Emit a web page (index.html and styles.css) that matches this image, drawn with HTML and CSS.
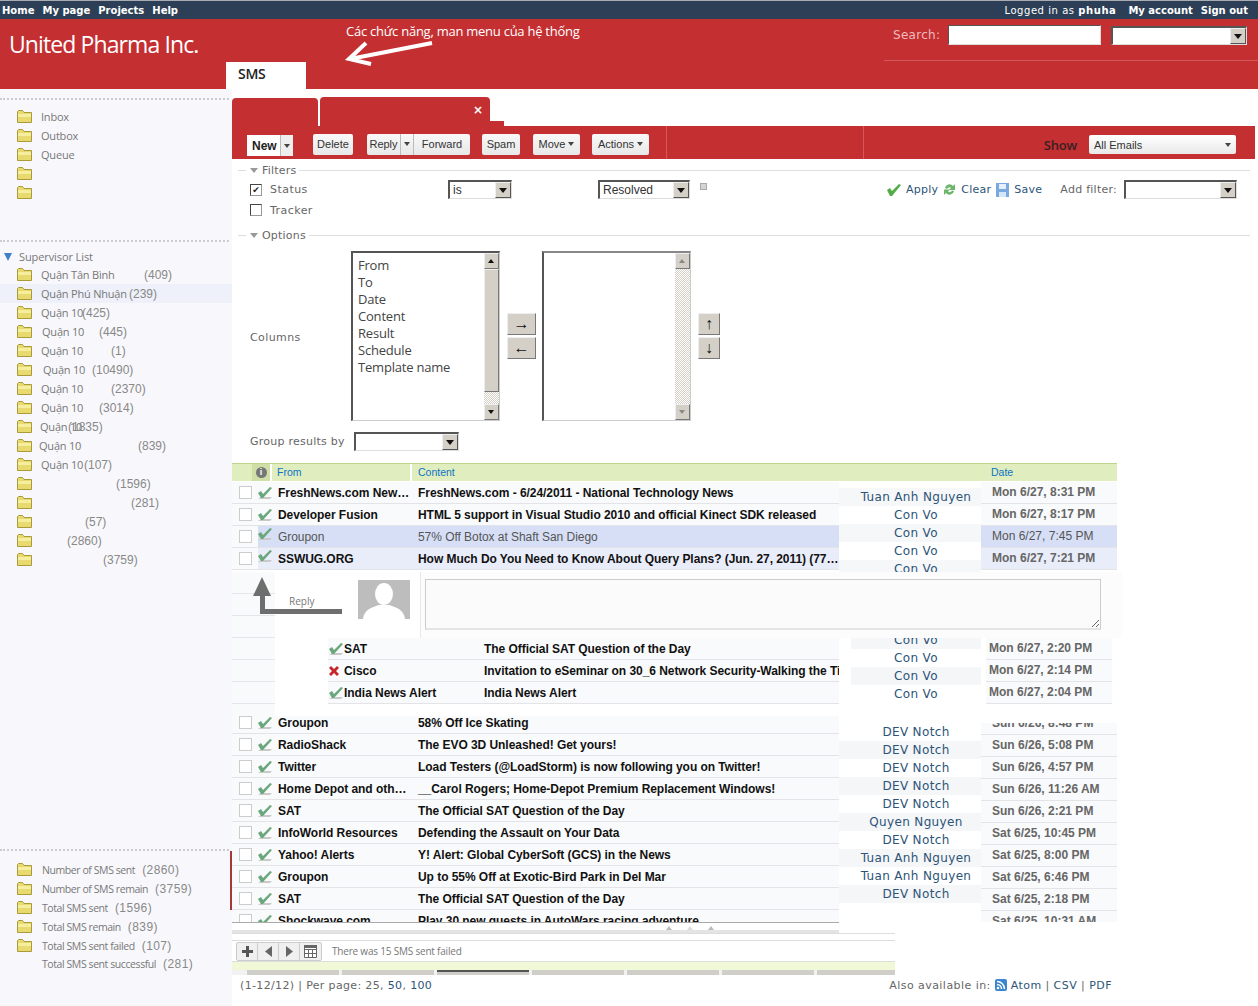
FILE: index.html
```html
<!DOCTYPE html>
<html lang="en">
  <head>
    <meta charset="UTF-8" />
    <meta name="viewport" content="width=device-width, initial-scale=1.0" />
    <title>United Pharma Inc. - SMS</title>
    <link rel="stylesheet" href="styles.css">
  </head>
  <body>
    <svg class="sprites" width="0" height="0">
      <symbol id="folder" viewBox="0 0 15 13">
        <path d="M0.5 12.5V1.5L1.5 0.5H5.5L7 2.5H14.5V12.5Z" fill="#e9da70" stroke="#a99a3a" />
        <path d="M1 4H14V7H1Z" fill="#f6ee9f" />
      </symbol>
      <symbol id="tick" viewBox="0 0 16 14">
        <path d="M1 13H13L15 11H4Z" fill="#c9c9c9" />
        <path d="M1 7L4 5L6 8L13 1L15 2L6 12H4Z" fill="#6aa87c" />
      </symbol>
      <symbol id="cross" viewBox="0 0 12 12">
        <path d="M1 3L3 1L6 4L9 1L11 3L8 6L11 9L9 11L6 8L3 11L1 9L4 6Z" fill="#c8242b" />
      </symbol>
    </svg>

    <div class="page">
      <div class="topbar">
        <div class="nav">
          <a>Home</a><a>My page</a><a>Projects</a><a>Help</a>
        </div>
        <div class="nav">
          <span class="logged">Logged in as <b>phuha</b></span><a>My account</a><a>Sign out</a>
        </div>
      </div>

      <header class="header">
        <div class="logo">United Pharma Inc.</div>
        <div class="note">Các chức năng, man menu của hệ thống</div>
        <svg class="note-arrow" width="92" height="28" viewBox="0 0 92 28">
          <path d="M88 3L6 19M22 3L5 19L27 24" fill="none" stroke="#fff" stroke-width="4" />
        </svg>
        <div class="search">
          <label>Search:</label>
          <div class="search-input"></div>
          <div class="combo combo-search"><span class="combo-text"></span><span class="combo-btn"></span></div>
        </div>
        <div class="header-line"></div>
        <div class="main-tab">SMS</div>
      </header>

      <div class="layout">
        <aside class="sidebar">
          <div class="dots"></div>
          <div class="tree tree-top">
            <div class="tree-row"><svg class="folder"><use href="#folder" /></svg><span class="name">Inbox</span></div>
            <div class="tree-row"><svg class="folder"><use href="#folder" /></svg><span class="name">Outbox</span></div>
            <div class="tree-row"><svg class="folder"><use href="#folder" /></svg><span class="name">Queue</span></div>
            <div class="tree-row"><svg class="folder"><use href="#folder" /></svg></div>
            <div class="tree-row"><svg class="folder"><use href="#folder" /></svg></div>
          </div>
          <div class="dots dots-super"></div>
          <div class="super-title"><span class="tri"></span>Supervisor List</div>
          <div class="tree">
            <div class="tree-row"><svg class="folder"><use href="#folder" /></svg><span class="name">Quận Tân Bình</span><span class="count off-103">(409)</span></div>
            <div class="tree-row selected"><svg class="folder"><use href="#folder" /></svg><span class="name">Quận Phú Nhuận</span><span class="count off-88">(239)</span></div>
            <div class="tree-row"><svg class="folder"><use href="#folder" /></svg><span class="name">Quận 10</span><span class="count off-41">(425)</span></div>
            <div class="tree-row"><svg class="folder"><use href="#folder" /></svg><span class="name nudge-r1">Quận 10</span><span class="count off-57">(445)</span></div>
            <div class="tree-row"><svg class="folder"><use href="#folder" /></svg><span class="name">Quận 10</span><span class="count off-70">(1)</span></div>
            <div class="tree-row"><svg class="folder"><use href="#folder" /></svg><span class="name nudge-r2">Quận 10</span><span class="count off-49">(10490)</span></div>
            <div class="tree-row"><svg class="folder"><use href="#folder" /></svg><span class="name">Quận 10</span><span class="count off-70">(2370)</span></div>
            <div class="tree-row"><svg class="folder"><use href="#folder" /></svg><span class="name">Quận 10</span><span class="count off-58">(3014)</span></div>
            <div class="tree-row"><svg class="folder"><use href="#folder" /></svg><span class="name nudge-l1">Quận 10</span><span class="count off-28">(1835)</span></div>
            <div class="tree-row"><svg class="folder"><use href="#folder" /></svg><span class="name nudge-l2">Quận 10</span><span class="count off-99">(839)</span></div>
            <div class="tree-row"><svg class="folder"><use href="#folder" /></svg><span class="name">Quận 10</span><span class="count off-43">(107)</span></div>
            <div class="tree-row"><svg class="folder"><use href="#folder" /></svg><span class="name"></span><span class="count off-75">(1596)</span></div>
            <div class="tree-row"><svg class="folder"><use href="#folder" /></svg><span class="name"></span><span class="count off-90">(281)</span></div>
            <div class="tree-row"><svg class="folder"><use href="#folder" /></svg><span class="name"></span><span class="count off-44">(57)</span></div>
            <div class="tree-row"><svg class="folder"><use href="#folder" /></svg><span class="name"></span><span class="count off-26">(2860)</span></div>
            <div class="tree-row"><svg class="folder"><use href="#folder" /></svg><span class="name"></span><span class="count off-62">(3759)</span></div>
          </div>
          <div class="dots dots-stats"></div>
          <div class="stats">
            <div class="tree-row"><svg class="folder"><use href="#folder" /></svg><span class="stat-name">Number of SMS sent</span><span class="stat-count">(2860)</span></div>
            <div class="tree-row"><svg class="folder"><use href="#folder" /></svg><span class="stat-name">Number of SMS remain</span><span class="stat-count">(3759)</span></div>
            <div class="tree-row"><svg class="folder"><use href="#folder" /></svg><span class="stat-name">Total SMS sent</span><span class="stat-count">(1596)</span></div>
            <div class="tree-row"><svg class="folder"><use href="#folder" /></svg><span class="stat-name">Total SMS remain</span><span class="stat-count">(839)</span></div>
            <div class="tree-row"><svg class="folder"><use href="#folder" /></svg><span class="stat-name">Total SMS sent failed</span><span class="stat-count">(107)</span></div>
            <div class="tree-row no-folder"><span class="stat-name">Total SMS sent successful</span><span class="stat-count">(281)</span></div>
          </div>
        </aside>

        <main class="content">
          <div class="tabs">
            <div class="tab tab-one"></div>
            <div class="tab tab-two"><span class="tab-close">×</span></div>
            <div class="tab-step"></div>
          </div>

          <div class="toolbar">
            <div class="tool-left">
              <div class="btn-new"><b>New</b><span class="caret-box"><i class="caret"></i></span></div>
              <a class="btn btn-delete">Delete</a>
              <div class="btn-group">
                <a class="btn btn-reply">Reply</a><a class="btn btn-caret"><i class="caret"></i></a><a class="btn btn-forward">Forward</a>
              </div>
              <a class="btn btn-spam">Spam</a>
              <a class="btn btn-move">Move <i class="caret"></i></a>
              <a class="btn btn-actions">Actions <i class="caret"></i></a>
            </div>
            <div class="tool-mid"></div>
            <div class="tool-right">
              <span class="show">Show</span>
              <div class="show-select"><span>All Emails</span><i class="caret"></i></div>
            </div>
          </div>

          <div class="legend legend-filters"><i class="dash"></i><i class="legend-tri"></i><span>Filters</span><i class="rule"></i></div>

          <div class="filter-row filter-status">
            <div class="f-check"><span class="checkbox checked">✔</span><span>Status</span></div>
            <div class="f-op"><div class="combo combo-is"><span class="combo-text">is</span><span class="combo-btn"></span></div></div>
            <div class="f-val">
              <div class="combo combo-resolved"><span class="combo-text">Resolved</span><span class="combo-btn"></span></div>
              <span class="mini-plus"></span>
            </div>
            <div class="f-actions">
              <svg class="act-icon" width="16" height="14" viewBox="0 0 16 14"><path d="M1 7L4 5L6 8L13 1L15 2L6 13H4Z" fill="#52ad48" /></svg>
              <a class="act-apply">Apply</a>
              <svg class="act-icon" width="13" height="15" viewBox="0 0 13 15"><path d="M2 6A4.500 4.500 0 0 1 10 4L12 2V8H6L8 6A2.500 2.500 0 0 0 4 7ZM11 9A4.500 4.500 0 0 1 3 11L1 13V7.500H7L5 9.500A2.500 2.500 0 0 0 9 8.500Z" fill="#6db56a" /></svg>
              <a class="act-clear">Clear</a>
              <svg class="act-icon" width="13" height="14" viewBox="0 0 13 14"><path d="M0 0H13V14H0Z" fill="#7aa9e0" /><path d="M3 1H10V6H3Z" fill="#e6f0fb" /><path d="M3 9H10V14H3Z" fill="#d7e6f6" /></svg>
              <a class="act-save">Save</a>
              <span class="add-filter">Add filter:</span>
              <div class="combo combo-add"><span class="combo-text"></span><span class="combo-btn"></span></div>
            </div>
          </div>
          <div class="filter-row filter-tracker">
            <div class="f-check"><span class="checkbox"></span><span>Tracker</span></div>
          </div>

          <div class="legend legend-options"><i class="dash"></i><i class="legend-tri"></i><span>Options</span><i class="rule"></i></div>

          <div class="columns">
            <div class="columns-label">Columns</div>
            <div class="listbox">
              <ul class="list-items">
                <li>From</li><li>To</li><li>Date</li><li>Content</li><li>Result</li><li>Schedule</li><li>Template name</li>
              </ul>
              <div class="scroll">
                <span class="scroll-btn up"></span>
                <span class="scroll-thumb"></span>
                <span class="scroll-track"></span>
                <span class="scroll-btn down"></span>
              </div>
            </div>
            <div class="move-btns move-lr">
              <button class="arrow-btn">→</button>
              <button class="arrow-btn">←</button>
            </div>
            <div class="listbox listbox-empty">
              <div class="list-items"></div>
              <div class="scroll scroll-off">
                <span class="scroll-btn up"></span>
                <span class="scroll-track"></span>
                <span class="scroll-btn down"></span>
              </div>
            </div>
            <div class="move-btns move-ud">
              <button class="arrow-btn">↑</button>
              <button class="arrow-btn">↓</button>
            </div>
          </div>

          <div class="group-row">
            <span>Group results by</span>
            <div class="combo combo-group"><span class="combo-text"></span><span class="combo-btn"></span></div>
          </div>

          <div class="thead">
            <div class="th-blank"></div>
            <div class="th-info"><span class="info">i</span></div>
            <div class="th th-from">From</div>
            <div class="th th-content">Content</div>
            <div class="th th-date">Date</div>
          </div>

          <!-- first rows -->
          <section class="mail-block block-one">
            <div class="mail-list">
              <div class="mail"><span class="chk"></span><svg class="tick"><use href="#tick" /></svg><span class="from">FreshNews.com New…</span><span class="subj">FreshNews.com - 6/24/2011 - National Technology News</span></div>
              <div class="mail"><span class="chk"></span><svg class="tick"><use href="#tick" /></svg><span class="from">Developer Fusion</span><span class="subj">HTML 5 support in Visual Studio 2010 and official Kinect SDK released</span></div>
              <div class="mail is-read active"><span class="chk"></span><svg class="tick raised"><use href="#tick" /></svg><span class="from">Groupon</span><span class="subj">57% Off Botox at Shaft San Diego</span></div>
              <div class="mail soft"><span class="chk"></span><svg class="tick raised"><use href="#tick" /></svg><span class="from">SSWUG.ORG</span><span class="subj">How Much Do You Need to Know About Query Plans? (Jun. 27, 2011) (77…</span></div>
            </div>
            <div class="to-list">
              <div>Tuan Anh Nguyen</div><div>Con Vo</div><div>Con Vo</div><div>Con Vo</div><div>Con Vo</div>
            </div>
            <div class="date-list">
              <div>Mon 6/27, 8:31 PM</div><div>Mon 6/27, 8:17 PM</div><div class="is-read active">Mon 6/27, 7:45 PM</div><div class="soft">Mon 6/27, 7:21 PM</div>
            </div>
          </section>

          <div class="expanded">
            <div class="reply-band">
              <svg class="reply-arrow" width="90" height="37" viewBox="0 0 90 37">
                <path d="M10 0L19 19H13V32H90V37H8V19H1Z" fill="#6e6e6e" />
              </svg>
              <span class="reply-label">Reply</span>
              <svg class="avatar" width="52" height="39" viewBox="0 0 52 39">
                <rect width="52" height="39" fill="#bdbdbd" />
                <ellipse cx="26" cy="14" rx="9" ry="11" fill="#fff" />
                <path d="M5 39C6 29 15 27 21 25H31C37 27 46 29 47 39Z" fill="#fff" />
              </svg>
              <div class="reply-panel"><textarea class="reply-box"></textarea></div>
            </div>

            <!-- replies of the open mail -->
            <section class="mail-block block-two">
              <div class="mail-list">
                <div class="mail"><svg class="tick"><use href="#tick" /></svg><span class="from">SAT</span><span class="subj">The Official SAT Question of the Day</span></div>
                <div class="mail"><svg class="cross"><use href="#cross" /></svg><span class="from">Cisco</span><span class="subj">Invitation to eSeminar on 30_6 Network Security-Walking the Ti</span></div>
                <div class="mail"><svg class="tick"><use href="#tick" /></svg><span class="from">India News Alert</span><span class="subj">India News Alert</span></div>
              </div>
              <div class="to-list">
                <div>Con Vo</div><div>Con Vo</div><div>Con Vo</div><div>Con Vo</div>
              </div>
              <div class="date-list">
                <div>Mon 6/27, 2:20 PM</div><div>Mon 6/27, 2:14 PM</div><div>Mon 6/27, 2:04 PM</div>
              </div>
            </section>
          </div>

          <!-- older rows -->
          <section class="mail-block block-three">
            <div class="mail-list">
              <div class="mail"><span class="chk"></span><svg class="tick"><use href="#tick" /></svg><span class="from">Groupon</span><span class="subj">58% Off Ice Skating</span></div>
              <div class="mail"><span class="chk"></span><svg class="tick"><use href="#tick" /></svg><span class="from">RadioShack</span><span class="subj">The EVO 3D Unleashed! Get yours!</span></div>
              <div class="mail"><span class="chk"></span><svg class="tick"><use href="#tick" /></svg><span class="from">Twitter</span><span class="subj">Load Testers (@LoadStorm) is now following you on Twitter!</span></div>
              <div class="mail"><span class="chk"></span><svg class="tick"><use href="#tick" /></svg><span class="from">Home Depot and oth…</span><span class="subj">__Carol Rogers; Home-Depot Premium Replacement Windows!</span></div>
              <div class="mail"><span class="chk"></span><svg class="tick"><use href="#tick" /></svg><span class="from">SAT</span><span class="subj">The Official SAT Question of the Day</span></div>
              <div class="mail"><span class="chk"></span><svg class="tick"><use href="#tick" /></svg><span class="from">InfoWorld Resources</span><span class="subj">Defending the Assault on Your Data</span></div>
              <div class="mail"><span class="chk"></span><svg class="tick"><use href="#tick" /></svg><span class="from">Yahoo! Alerts</span><span class="subj">Y! Alert: Global CyberSoft (GCS) in the News</span></div>
              <div class="mail"><span class="chk"></span><svg class="tick"><use href="#tick" /></svg><span class="from">Groupon</span><span class="subj">Up to 55% Off at Exotic-Bird Park in Del Mar</span></div>
              <div class="mail"><span class="chk"></span><svg class="tick"><use href="#tick" /></svg><span class="from">SAT</span><span class="subj">The Official SAT Question of the Day</span></div>
              <div class="mail"><span class="chk"></span><svg class="tick"><use href="#tick" /></svg><span class="from">Shockwave.com</span><span class="subj">Play 30 new quests in AutoWars racing adventure</span></div>
            </div>
            <div class="to-list">
              <div>DEV Notch</div><div>DEV Notch</div><div>DEV Notch</div><div>DEV Notch</div><div>DEV Notch</div><div>Quyen Nguyen</div><div>DEV Notch</div><div>Tuan Anh Nguyen</div><div>Tuan Anh Nguyen</div><div>DEV Notch</div>
            </div>
            <div class="date-list">
              <div>Sun 6/26, 8:48 PM</div><div>Sun 6/26, 5:08 PM</div><div>Sun 6/26, 4:57 PM</div><div>Sun 6/26, 11:26 AM</div><div>Sun 6/26, 2:21 PM</div><div>Sat 6/25, 10:45 PM</div><div>Sat 6/25, 8:00 PM</div><div>Sat 6/25, 6:46 PM</div><div>Sat 6/25, 2:18 PM</div><div>Sat 6/25, 10:31 AM</div>
            </div>
          </section>

          <div class="table-end"><i class="up-mark"></i><i class="up-mark small"></i><i class="up-mark"></i></div>

          <div class="pager">
            <div class="pager-btns">
              <span class="pg"><svg width="11" height="11" viewBox="0 0 11 11"><path d="M4 0H7V4H11V7H7V11H4V7H0V4H4Z" fill="#555" /></svg></span>
              <span class="pg"><svg width="7" height="11" viewBox="0 0 7 11"><path d="M7 0V11L0 5.500Z" fill="#666" /></svg></span>
              <span class="pg"><svg width="7" height="11" viewBox="0 0 7 11"><path d="M0 0V11L7 5.500Z" fill="#666" /></svg></span>
              <span class="pg"><svg width="13" height="13" viewBox="0 0 13 13"><path d="M0.500 0.500H12.500V12.500H0.500ZM0.500 4.500H12.500M0.500 8.500H12.500M4.500 4.500V12.500M8.500 4.500V12.500" fill="#fff" stroke="#666" /><path d="M0 0H13V3H0Z" fill="#666" /></svg></span>
            </div>
            <span class="pager-msg">There was 15 SMS sent failed</span>
          </div>

          <div class="green-strip"></div>
          <div class="gray-strip"><i></i><i></i><i class="tab-dark"></i><i></i><i></i><i></i><i></i></div>

          <footer class="footer">
            <div>(1-12/12) | Per page: 25, <a>50</a>, <a>100</a></div>
            <div class="also">
              Also available in:
              <svg class="rss" width="12" height="12" viewBox="0 0 12 12">
                <rect width="12" height="12" rx="2" fill="#3a87cf" />
                <circle cx="3" cy="9" r="1.300" fill="#fff" />
                <path d="M2 5.500A4.500 4.500 0 0 1 6.500 10M2 2.500A7.500 7.500 0 0 1 9.500 10" fill="none" stroke="#fff" stroke-width="1.500" />
              </svg>
              <a>Atom</a> | <a>CSV</a> | <a>PDF</a>
            </div>
          </footer>
        </main>
      </div>
    </div>
  </body>
</html>
```

FILE: styles.css
```css
/* Base */
* {
  box-sizing: border-box;
}

body {
  margin: 0;
  background: #fff;
  font-family: "DejaVu Sans", sans-serif;
  font-size: 11px;
  color: #555;
}

.sprites {
  position: absolute;
}

.page {
  width: 1258px;
  height: 1006px;
  overflow: hidden;
}

a {
  color: #2b5478;
}

/* Top bar */
.topbar {
  height: 19px;
  background: #2c3f56;
  border-top: 1px solid #a9adb3;
  display: flex;
  justify-content: space-between;
  align-items: center;
  padding: 0 10px 0 2px;
  color: #fff;
  font-size: 10px;
}

.nav {
  display: flex;
}

.nav a {
  color: #fff;
  font-weight: bold;
  margin-right: 8px;
}

.nav a:last-child {
  margin-right: 0;
}

.logged {
  letter-spacing: 0.55px;
  margin-right: 12px;
}

/* Red header */
.header {
  position: relative;
  height: 70px;
  background: #c42f32;
}

.logo {
  padding: 9px 0 0 9px;
  font-family: "Open Sans", sans-serif;
  font-size: 23px;
  letter-spacing: -0.9px;
  line-height: 32px;
  color: #fff;
}

.note {
  position: absolute;
  left: 346px;
  top: 3px;
  font-family: "Open Sans", sans-serif;
  font-size: 13px;
  letter-spacing: -0.25px;
  color: #fff;
}

.note-arrow {
  position: absolute;
  left: 344px;
  top: 21px;
}

.search {
  position: absolute;
  left: 893px;
  top: 6px;
  display: flex;
  align-items: center;
  color: #eebcbc;
  font-size: 12px;
  letter-spacing: 0.3px;
}

.search-input {
  width: 153px;
  height: 20px;
  margin-left: 8px;
  background: #fff;
  border: 1px solid #ddd;
  border-top-color: #555;
  border-left-color: #555;
}

.combo-search {
  width: 136px;
  margin-left: 10px;
}

.header-line {
  position: absolute;
  left: 884px;
  right: 0;
  top: 41px;
  height: 1px;
  background: #d2585b;
}

.main-tab {
  position: absolute;
  left: 226px;
  bottom: 0;
  width: 80px;
  height: 27px;
  padding-left: 12px;
  background: #fff;
  font-family: "Open Sans", sans-serif;
  font-size: 14px;
  font-weight: 600;
  letter-spacing: -0.3px;
  line-height: 24px;
  color: #222;
}

/* Old style select box */
.combo {
  display: flex;
  height: 19px;
  background: #fff;
  border: 1px solid #ddd;
  border-top: 2px solid #555;
  border-left: 2px solid #555;
}

.combo-text {
  flex: 1;
  padding-left: 3px;
  font-family: "Liberation Sans", sans-serif;
  font-size: 12px;
  line-height: 16px;
  letter-spacing: 0;
  color: #333;
}

.combo-btn {
  width: 16px;
  background: #d4d0c8;
  border: 1px solid #eee;
  border-right-color: #555;
  border-bottom-color: #555;
  position: relative;
}

.combo-btn::after {
  content: "";
  position: absolute;
  left: 3px;
  top: 5px;
  border: 4px solid transparent;
  border-top: 5px solid #111;
  border-bottom: 0;
}

/* Main layout */
.layout {
  display: grid;
  grid-template-columns: 232px 1fr;
  height: 917px;
}

.sidebar {
  background: #f8f8fc;
  padding-top: 9px;
}

.dots {
  height: 1px;
  margin-right: 3px;
  border-top: 2px dotted #ccc;
}

.dots-super {
  margin-top: 38px;
}

.dots-stats {
  margin-top: 280px;
}

.tree-top {
  margin-top: 7px;
}

.tree-row {
  display: flex;
  align-items: center;
  height: 19px;
  padding-left: 17px;
  white-space: nowrap;
}

.tree-row.selected {
  background: #eef1fa;
}

.folder {
  width: 15px;
  height: 13px;
  flex: none;
}

.name {
  width: 0;
  margin-left: 9px;
  font-family: "Open Sans", sans-serif;
  font-size: 11px;
  letter-spacing: -0.2px;
  color: #777;
}

.nudge-r1 { margin-left: 10px; }
.nudge-r2 { margin-left: 11px; }
.nudge-l1 { margin-left: 8px; }
.nudge-l2 { margin-left: 7px; }

.count,
.stat-count {
  font-family: "Liberation Sans", sans-serif;
  font-size: 12px;
  color: #888;
}

.off-103 { margin-left: 103px; }
.off-99 { margin-left: 99px; }
.off-90 { margin-left: 90px; }
.off-88 { margin-left: 88px; }
.off-75 { margin-left: 75px; }
.off-70 { margin-left: 70px; }
.off-62 { margin-left: 62px; }
.off-58 { margin-left: 58px; }
.off-57 { margin-left: 57px; }
.off-49 { margin-left: 49px; }
.off-44 { margin-left: 44px; }
.off-43 { margin-left: 43px; }
.off-41 { margin-left: 41px; }
.off-28 { margin-left: 28px; }
.off-26 { margin-left: 26px; }

.super-title {
  display: flex;
  align-items: center;
  height: 17px;
  margin-top: 6px;
  padding-left: 4px;
  font-family: "Open Sans", sans-serif;
  font-size: 11px;
  letter-spacing: -0.1px;
  color: #777;
}

.tri {
  width: 0;
  margin-right: 7px;
  border: 4.5px solid transparent;
  border-top: 8px solid #3f7fc8;
  border-bottom: 0;
}

.stats {
  padding-top: 9px;
  background: linear-gradient(#a5383a, #a5383a) no-repeat right top / 2px 59px;
}

.stat-name {
  margin-left: 10px;
  font-family: "Open Sans", sans-serif;
  font-size: 10.5px;
  letter-spacing: -0.42px;
  color: #777;
}

.stat-count {
  margin-left: 7px;
  letter-spacing: 0.4px;
}

.no-folder {
  height: 17px;
  padding-left: 32px;
}

/* Tabs and toolbar */
.content {
  padding-top: 8px;
}

.tabs {
  display: flex;
  height: 29px;
  align-items: flex-end;
}

.tab {
  background: #c42f32;
  border-radius: 4px 4px 0 0;
}

.tab-one {
  width: 86px;
  height: 28px;
}

.tab-two {
  position: relative;
  width: 170px;
  height: 29px;
  margin-left: 2px;
}

.tab-close {
  position: absolute;
  left: 153px;
  top: 6px;
  color: #fff;
  font-size: 12px;
  line-height: 14px;
  font-weight: bold;
}

.tab-step {
  width: 14px;
  height: 5px;
  background: #c42f32;
}

.toolbar {
  display: flex;
  height: 33px;
  margin-right: 3px;
  background: #c42f32;
}

.tool-left {
  display: flex;
  width: 435px;
  padding: 8px 0 0 15px;
  border-right: 1px solid #d2585b;
}

.tool-mid {
  width: 197px;
  border-right: 1px solid #d2585b;
}

.tool-right {
  flex: 1;
  display: flex;
  align-items: center;
  justify-content: flex-end;
  padding: 4px 19px 0 0;
}

.btn,
.btn-new {
  display: flex;
  align-items: center;
  justify-content: center;
  gap: 3px;
  height: 21px;
  padding-bottom: 2px;
  background: linear-gradient(#f8f8f8, #e8e8e8);
  font-family: "Liberation Sans", sans-serif;
  font-size: 11px;
  color: #333;
}

.btn {
  border-radius: 2px;
}

.btn-new {
  width: 46px;
  margin-top: 1px;
  padding-bottom: 0;
  background: #fff;
  font-size: 12px;
  color: #222;
}

.btn-new b {
  flex: 1;
  padding-left: 5px;
}

.caret-box {
  width: 13px;
  height: 100%;
  display: flex;
  align-items: center;
  justify-content: center;
  background: #eee;
  border-left: 1px solid #bbb;
}

.caret {
  display: inline-block;
  border: 3.5px solid transparent;
  border-top: 4px solid #444;
  border-bottom: 0;
}

.btn-delete { width: 40px; margin-left: 20px; }
.btn-group { display: flex; margin-left: 14px; }
.btn-reply { width: 34px; border-right: 1px solid #bbb; border-radius: 2px 0 0 2px; }
.btn-caret { width: 13px; border-radius: 0; border-right: 1px solid #bbb; }
.btn-forward { width: 56px; border-radius: 0 2px 2px 0; }
.btn-spam { width: 38px; margin-left: 12px; }
.btn-move { width: 47px; margin-left: 13px; }
.btn-actions { width: 57px; margin-left: 12px; }

.show {
  margin-right: 12px;
  font-family: "Open Sans", sans-serif;
  font-size: 13px;
  font-weight: 600;
  letter-spacing: -0.2px;
  color: #3a2022;
}

.show-select {
  display: flex;
  align-items: center;
  justify-content: space-between;
  width: 147px;
  height: 19px;
  padding: 0 5px;
  background: linear-gradient(#fff, #e9e9e9);
  border-radius: 2px;
  font-family: "Liberation Sans", sans-serif;
  font-size: 11px;
  color: #333;
}

/* Filters */
.legend {
  display: flex;
  align-items: center;
  height: 12px;
  margin: 5px 8px 0 6px;
  letter-spacing: 0.2px;
  color: #666;
}

.legend-options {
  margin-top: 9px;
}

.dash {
  width: 8px;
  height: 1px;
  background: #ddd;
}

.legend-tri {
  margin: 0 4px;
  border: 4px solid transparent;
  border-top: 5px solid #999;
  border-bottom: 0;
}

.rule {
  flex: 1;
  height: 1px;
  margin-left: 3px;
  background: #ddd;
}

.filter-row {
  display: flex;
  align-items: center;
  padding-left: 18px;
  letter-spacing: 0.45px;
  color: #666;
}

.filter-status {
  height: 19px;
  margin-top: 4px;
}

.filter-tracker {
  height: 20px;
  margin-top: 1px;
}

.f-check {
  display: flex;
  align-items: center;
  gap: 8px;
  width: 198px;
}

.checkbox {
  width: 12px;
  height: 12px;
  background: #fff;
  border: 1px solid #999;
  border-top-color: #444;
  border-left-color: #444;
  font-size: 9px;
  line-height: 10px;
  letter-spacing: 0;
  text-align: center;
  color: #222;
}

.f-op {
  width: 150px;
}

.combo-is {
  width: 64px;
}

.f-val {
  display: flex;
  width: 288px;
}

.combo-resolved {
  width: 92px;
}

.mini-plus {
  width: 7px;
  height: 7px;
  margin: 3px 0 0 10px;
  background: #d4d4d4;
  border: 1px solid #aaa;
}

.f-actions {
  display: flex;
  align-items: center;
  letter-spacing: 0.25px;
}

.f-actions a {
  margin: 0 0 1px 4px;
  color: #2b5478;
}

.f-actions .act-apply { margin-right: 5px; }
.f-actions .act-clear { margin-right: 5px; margin-left: 5px; }
.f-actions .act-save { margin-right: 18px; margin-left: 5px; }

.add-filter {
  margin-right: 7px;
}

.combo-add {
  width: 113px;
}

/* Columns picker */
.columns {
  display: flex;
  align-items: center;
  height: 170px;
  margin-top: 10px;
  padding-left: 18px;
}

.columns-label {
  width: 101px;
  padding-top: 2px;
  letter-spacing: 0.4px;
  color: #666;
}

.listbox {
  display: flex;
  width: 149px;
  height: 170px;
  background: #fff;
  border: 1px solid #ccc;
  border-top: 2px solid #555;
  border-left: 2px solid #555;
}

.listbox-empty {
  border-top-color: #888;
}

.list-items {
  flex: 1;
  margin: 0;
  padding: 4px 0 0 5px;
  list-style: none;
  font-family: "Open Sans", sans-serif;
  font-size: 13px;
  letter-spacing: -0.2px;
  line-height: 17px;
  color: #444;
}

.scroll {
  display: flex;
  flex-direction: column;
  width: 15px;
}

.scroll-btn {
  position: relative;
  height: 16px;
  background: #d4d0c8;
  border: 1px solid #eee;
  border-right-color: #777;
  border-bottom-color: #777;
}

.scroll-btn::after {
  content: "";
  position: absolute;
  left: 3px;
  top: 5px;
  border: 3.500px solid transparent;
}

.scroll-btn.up::after {
  border-bottom: 4px solid #111;
  border-top: 0;
}

.scroll-btn.down::after {
  border-top: 4px solid #111;
  border-bottom: 0;
}

.scroll-off .scroll-btn.up::after {
  border-bottom-color: #888;
}

.scroll-off .scroll-btn.down::after {
  border-top-color: #888;
}

.scroll-thumb {
  height: 123px;
  background: #d4d0c8;
  border: 1px solid #eee;
  border-right-color: #777;
  border-bottom-color: #777;
}

.scroll-track {
  flex: 1;
  background: repeating-conic-gradient(#d4d0c8 0 25%, #fff 0 50%) 0 0 / 2px 2px;
}

.move-btns {
  display: flex;
  flex-direction: column;
  gap: 2px;
}

.move-lr {
  margin: 0 6px 0 7px;
}

.move-lr .arrow-btn {
  width: 29px;
}

.move-ud {
  margin-left: 7px;
}

.move-ud .arrow-btn {
  width: 22px;
}

.arrow-btn {
  height: 22px;
  padding: 0;
  background: #d4d0c8;
  border: 1px solid #eee;
  border-right-color: #777;
  border-bottom-color: #777;
  font-family: "Liberation Sans", sans-serif;
  font-size: 16px;
  line-height: 18px;
  color: #111;
}

.group-row {
  display: flex;
  align-items: center;
  height: 19px;
  margin-top: 11px;
  padding-left: 18px;
  letter-spacing: 0.25px;
  color: #666;
}

.combo-group {
  width: 105px;
  margin-left: 9px;
}

/* Mail table */
.thead {
  display: flex;
  align-items: stretch;
  width: 885px;
  height: 18px;
  margin-top: 12px;
  background: #e0edbe;
  border-top: 1px solid #bcd58a;
  font-family: "Liberation Sans", sans-serif;
  font-size: 10.5px;
  line-height: 17px;
  color: #0b74c4;
}

.th-blank {
  width: 20px;
}

.th-info {
  display: flex;
  align-items: center;
  justify-content: center;
  width: 18px;
  background: #cfe0a6;
}

.info {
  width: 11px;
  height: 11px;
  border-radius: 50%;
  background: #777;
  color: #fff;
  font-size: 9px;
  font-weight: bold;
  line-height: 11px;
  text-align: center;
}

.th {
  padding-left: 5px;
  border-left: 2px solid #fff;
}

.th-from { width: 140px; }
.th-content { width: 572px; padding-left: 6px; }
.th-date { flex: 1; padding-left: 9px; border-left: 0; }

.mail-block {
  display: grid;
  grid-template-columns: 607px 142px 136px;
  font-family: "Liberation Sans", sans-serif;
  font-size: 12px;
}

.block-one {
  height: 90px;
  margin-top: 1px;
  overflow: hidden;
}

.mail {
  display: flex;
  align-items: center;
  height: 22px;
  background: #f9fafb;
  border-bottom: 1px solid #e4e4e8;
  font-weight: bold;
  letter-spacing: -0.05px;
  color: #111;
  white-space: nowrap;
  overflow: hidden;
}

.mail.active {
  background: linear-gradient(to right, #f9fafb 26px, #d6dff6 26px);
}

.mail.soft {
  background: linear-gradient(to right, #f9fafb 26px, #e9edfa 26px);
}

.date-list .active {
  background: #d6dff6;
}

.date-list .soft {
  background: #e9edfa;
}

.mail.is-read,
.date-list .is-read {
  font-weight: normal;
  color: #555;
}

.chk {
  flex: none;
  width: 13px;
  height: 13px;
  margin-left: 7px;
  background: #fff;
  border: 1px solid #ccc;
}

.tick {
  flex: none;
  width: 16px;
  height: 14px;
  margin: 0 5px 0 5px;
}

.tick.raised {
  margin-bottom: 5px;
}

.cross {
  flex: none;
  width: 12px;
  height: 12px;
  margin: 0 5px 0 0;
}

.from {
  flex: none;
  width: 140px;
}

.to-list {
  font-family: "DejaVu Sans", sans-serif;
  font-size: 12px;
  letter-spacing: 0.35px;
  text-align: center;
  color: #2b5478;
}

.to-list div {
  height: 18px;
  line-height: 18px;
}

.block-one .to-list {
  padding-top: 6px;
}

.block-one .to-list div,
.block-three .to-list div {
  padding-left: 12px;
}

.block-one .to-list div:nth-child(odd) {
  background: #f6f7f9;
}

.date-list div {
  height: 22px;
  padding-left: 11px;
  line-height: 20px;
  font-weight: bold;
  color: #666;
  background: #f9fafb;
  border-bottom: 1px solid #e4e4e8;
}

/* Reply area */
.expanded {
  height: 144px;
  background: repeating-linear-gradient(#f9fafb 0 21px, #e6e6ea 21px 22px) no-repeat left top / 43px 100%;
}

.reply-band {
  position: relative;
  display: flex;
  height: 66px;
  padding-left: 20px;
}

.reply-arrow {
  margin-top: 5px;
}

.reply-label {
  position: absolute;
  left: 57px;
  top: 22px;
  font-family: "Open Sans", sans-serif;
  font-size: 10px;
  color: #777;
}

.avatar {
  margin: 8px 0 0 16px;
}

.reply-panel {
  height: 66px;
  margin-left: 10px;
  padding: 7px 21px 0 4px;
  background: #fcfcfd;
  border-left: 1px solid #e8e8e8;
}

.reply-box {
  display: block;
  width: 676px;
  height: 51px;
  margin: 0;
  background: #fbfbfb;
  border: 1px solid #ccc;
  border-bottom: 2px solid #e4e4e4;
}

.block-two {
  height: 66px;
}

.block-two .mail-list {
  margin-left: 96px;
  overflow: hidden;
}

.block-two .tick {
  margin: 0;
}

.block-two .cross {
  margin-right: 4px;
}

.block-two .to-list {
  height: 66px;
  margin-left: 12px;
  overflow: hidden;
}

.block-two .to-list div:first-child {
  margin-top: -7px;
  background: #f5f6f8;
}

.block-two .to-list div:nth-child(3) {
  background: #f5f6f8;
}

.block-two .date-list {
  width: 126px;
  margin-left: 5px;
}

.block-two .date-list div {
  padding-left: 3px;
}

.block-three {
  height: 206px;
  overflow: hidden;
}

.block-three .mail-list {
  margin-top: -4px;
}

.block-three .to-list {
  height: 180px;
  margin-top: 7px;
}

.block-three .to-list div:nth-child(even) {
  background: #f5f6f8;
}

.block-three .date-list {
  height: 199px;
  margin-top: 7px;
  overflow: hidden;
}

.block-three .date-list div:first-child {
  margin-top: -10px;
}

.table-end {
  display: flex;
  justify-content: flex-end;
  gap: 15px;
  width: 607px;
  height: 11px;
  padding: 3px 125px 0 0;
  background: linear-gradient(#fff 0 7px, #e4e4e4 7px);
  border-top: 1px solid #aaa;
}

.up-mark {
  border: 3px solid transparent;
  border-bottom: 4px solid #bbb;
  border-top: 0;
  height: 0;
}

.up-mark.small {
  opacity: 0.5;
}

.pager {
  display: flex;
  align-items: center;
  width: 663px;
  height: 28px;
  border-top: 1px solid #ddd;
  background: linear-gradient(#ddd, #ddd) no-repeat left 6px / 100% 1px;
  padding-top: 7px;
}

.pager-btns {
  display: flex;
  height: 19px;
  margin-left: 4px;
  background: #f0f0f0;
  border: 1px solid #ccc;
  border-radius: 2px;
}

.pg {
  display: flex;
  align-items: center;
  justify-content: center;
  width: 21px;
  border-right: 1px solid #ccc;
}

.pg:last-child {
  border-right: 0;
}

.pager-msg {
  margin-left: 10px;
  font-family: "Open Sans", sans-serif;
  font-size: 10px;
  letter-spacing: -0.2px;
  color: #777;
}

.green-strip {
  width: 663px;
  height: 9px;
  background: #f1f8d8;
  border-top: 1px solid #ddd;
}

.gray-strip {
  display: flex;
  gap: 3px;
  width: 663px;
  height: 5px;
  padding-left: 15px;
  background: #f2f2f2;
  overflow: hidden;
}

.gray-strip i {
  flex: none;
  width: 92px;
  background: #d0cec8;
}

.gray-strip .tab-dark {
  border-top: 2px solid #555;
}

.footer {
  display: flex;
  justify-content: space-between;
  width: 880px;
  margin-top: 4px;
  padding-left: 8px;
  letter-spacing: 0.35px;
  color: #666;
  line-height: 14px;
}

.also {
  letter-spacing: 0.45px;
}

.rss {
  vertical-align: -2px;
}
```
